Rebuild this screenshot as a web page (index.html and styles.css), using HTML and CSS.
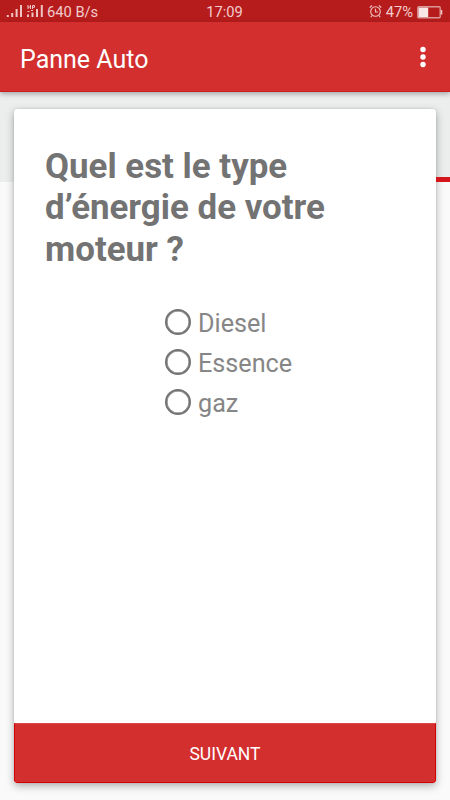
FILE: index.html
```html
<!DOCTYPE html>
<html lang="fr">
<head>
    <meta charset="UTF-8">
    <meta name="viewport" content="width=device-width, initial-scale=1.0">
    <title>Panne Auto</title>
    <link rel="stylesheet" href="styles.css">
</head>
<body>
    <div class="status-bar">
        <div class="status-left">
            <svg class="signal" width="38" height="14" viewBox="0 0 38 14">
                <rect x="0.8" y="10" width="2" height="2"/>
                <rect x="5.2" y="8" width="2" height="4"/>
                <rect x="9.6" y="4" width="2" height="8"/>
                <rect x="14" y="0" width="2" height="12"/>
                <rect x="21" y="9.5" width="2" height="2.5"/>
                <rect x="25.5" y="7.5" width="2" height="4.5"/>
                <rect x="30" y="4" width="2" height="8"/>
                <rect x="34.8" y="0" width="2" height="12"/>
                <path d="M22 0v4M24.5 0v4M22 2h2.5M26.5 4V.5H28.5V2.3H26.5M21.5 6.5h2M25 5.5h2" fill="none" stroke="#eec4c4" stroke-width="1"/>
            </svg>
            <span class="speed">640 B/s</span>
        </div>
        <span class="clock">17:09</span>
        <div class="status-right">
            <svg class="alarm" width="13" height="14" viewBox="0 0 13 14">
                <circle cx="6.5" cy="6.5" r="4.8"/>
                <path d="M6.5 3.8V7H9M.7 2.7L3 .5M12.3 2.7L10 .5M3 10.5L1.8 12.1M10 10.5l1.2 1.6"/>
            </svg>
            <span class="percent">47%</span>
            <svg class="battery" width="26" height="13" viewBox="0 0 26 13">
                <rect x="0.8" y="0.8" width="22.4" height="11" rx="1" fill="none" stroke="#dc9898" stroke-width="1.4"/>
                <rect x="1.5" y="1.6" width="9.7" height="9.4" fill="#f7e6e6"/>
                <path d="M23.8 4h1.5v4.6h-1.5z" fill="#eec4c4"/>
            </svg>
        </div>
    </div>

    <header class="app-bar">
        <h1>Panne Auto</h1>
        <button class="menu" aria-label="Menu">
            <svg width="6" height="22" viewBox="0 0 6 22">
                <circle cx="3" cy="3.5" r="2.7"/>
                <circle cx="3" cy="11" r="2.7"/>
                <circle cx="3" cy="18.5" r="2.7"/>
            </svg>
        </button>
    </header>

    <main class="page">
        <form class="card">
            <div class="question">
                <h2>Quel est le type d’énergie de votre moteur ?</h2>
                <div class="options">
                    <label><input type="radio" name="energie" value="diesel">Diesel</label>
                    <label><input type="radio" name="energie" value="essence">Essence</label>
                    <label><input type="radio" name="energie" value="gaz">gaz</label>
                </div>
            </div>
            <button type="submit" class="next">SUIVANT</button>
        </form>
        <!-- end of the tab strip, sticks out beside the card -->
        <div class="tab-line"></div>
    </main>
</body>
</html>
```

FILE: styles.css
```css
* {
    box-sizing: border-box;
}
body {
    margin: 0;
    height: 800px;
    display: flex;
    flex-direction: column;
    overflow: hidden;
    font-family: Roboto, sans-serif;
    background-color: #fafafa;
}
.status-bar {
    display: grid;
    grid-template-columns: 1fr auto 1fr;
    align-items: center;
    height: 22px;
    padding: 1px 7px 0 6px;
    background-color: #b71c1c;
    color: #f1cccc;
    font-size: 14.7px;
    line-height: 21px;
}
.status-left, .status-right {
    display: flex;
    align-items: center;
}
.status-left {
    gap: 3px;
}
.status-right {
    justify-content: flex-end;
    gap: 4px;
}
.status-bar span {
    padding-top: 1px;
}
.signal {
    fill: #eec4c4;
}
.alarm {
    fill: none;
    stroke: #eec4c4;
    stroke-width: 1.1;
}
.app-bar {
    position: relative;
    z-index: 1;
    display: flex;
    align-items: center;
    justify-content: space-between;
    height: 70px;
    padding: 5px 24px 0 20px;
    background-color: #d32f2f;
    border-bottom: 1px solid #c91f1f;
    box-shadow: 0 2px 5px rgba(0, 0, 0, 0.3);
}
.app-bar h1 {
    margin: 0;
    color: #fff;
    font-size: 25px;
    font-weight: 400;
}
.menu {
    display: flex;
    padding: 0;
    margin-bottom: 4px;
    border: none;
    background: none;
}
.menu svg {
    fill: #fff;
}
.page {
    position: relative;
    flex: 1;
    padding: 17px 14px;
    background: linear-gradient(#eceeee 90px, #fafafa 90px);
}
.tab-line {
    position: absolute;
    top: 85px;
    right: 0;
    width: 14px;
    height: 5px;
    background-color: #d5161b;
}
.card {
    position: relative;
    display: flex;
    flex-direction: column;
    height: 674px;
    border-radius: 3px;
    overflow: hidden;
    background-color: #fff;
    box-shadow: 0 3px 9px rgba(0, 0, 0, 0.3), 0 0 2px rgba(0, 0, 0, 0.15);
}
.question {
    flex: 1;
    padding: 37px 31px;
}
.question h2 {
    margin: 0;
    color: #737373;
    font-size: 34.9px;
    font-weight: 700;
    line-height: 41.3px;
}
.options {
    width: 130px;
    margin: 34px 0 0 120px;
}
.options label {
    display: flex;
    align-items: center;
    gap: 7px;
    height: 40px;
    color: #868686;
    font-size: 25.2px;
}
.options input {
    appearance: none;
    width: 26px;
    height: 26px;
    margin: 0 0 4px;
    border: 2px solid #737373;
    border-radius: 50%;
    box-shadow: inset 0 0 0 0.5px #737373;
}
.options input:checked {
    background-color: #d32f2f;
}
.next {
    height: 60px;
    padding: 2px 0 0;
    border: 1px solid #d50000;
    border-top-color: #dc4a4a;
    border-radius: 0 0 3px 3px;
    background-color: #d32f2f;
    color: #fff;
    font-family: inherit;
    font-size: 17.5px;
}
```
